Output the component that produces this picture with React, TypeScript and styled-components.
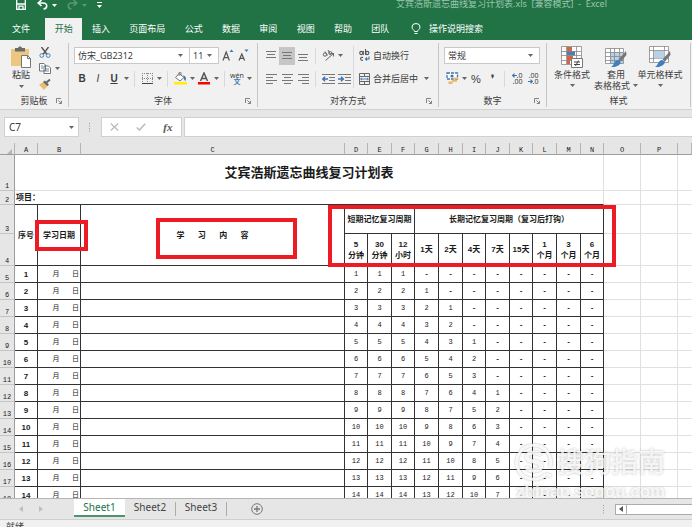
import React from "react";
import styled, { createGlobalStyle, css } from "styled-components";

const GREEN = "#217346";
const UI_FONT = `"Noto Sans", "Noto Sans CJK SC", sans-serif`;
const CELL_FONT = `"Liberation Sans", "Noto Sans CJK SC", sans-serif`;
const MONO_FONT = `"Liberation Mono", "Noto Sans CJK SC", monospace`;

const GlobalStyle = createGlobalStyle`
  * { box-sizing: border-box; }
  body { margin: 0; overflow: hidden; font-family: ${UI_FONT}; font-size: 9px; color: #3c3c3c; }
  button, input, select { font: inherit; color: inherit; border: 0; padding: 0; margin: 0; background: none; border-radius: 0; }
  svg { display: block; flex: none; }
`;

const Window = styled.main`
  display: flex;
  flex-direction: column;
  height: 100vh;
  background: #e6e6e6;
`;

/* ---------- title bar and ribbon tabs ---------- */

const TitleBar = styled.header`
  display: flex;
  align-items: flex-start;
  height: 18px;
  overflow: hidden;
  background: ${GREEN};
`;

const QuickAccess = styled.div`
  display: flex;
  align-items: center;
  gap: 6px;
  width: 396px;
  height: 10px;
  padding-left: 15px;
`;

const QuickButton = styled.button`
  display: flex;
  align-items: center;
  gap: 4px;
  margin-right: 4px;
`;

const DocumentTitle = styled.h1`
  margin: 0;
  font-size: 9px;
  font-weight: 400;
  line-height: 8px;
  white-space: pre;
  color: #9cc5ad;
`;

const TabBar = styled.nav`
  display: flex;
  height: 22px;
  background: ${GREEN};
`;

const RibbonTabs = styled.div`
  display: flex;
  width: 354px;
`;

const RibbonTab = styled.button<{ $active?: boolean; $file?: boolean }>`
  flex: 1 0 auto;
  padding: 0 9px;
  line-height: 20px;
  white-space: nowrap;
  color: ${(p) => (p.$active ? GREEN : "#ffffff")};
  background: ${(p) => (p.$active ? "#f1f1f1" : "transparent")};
  ${(p) => p.$file && css`flex: 0 0 45px; padding: 0 15px 0 12px;`}
`;

const TellMe = styled.button`
  display: flex;
  align-items: center;
  gap: 8px;
  margin-left: 12px;
  padding-bottom: 1px;
  color: #ffffff;
`;

/* ---------- ribbon ---------- */

const Ribbon = styled.section`
  display: flex;
  height: 70px;
  padding-top: 3px;
  background: #f1f1f1;
  border-bottom: 1px solid #d2d2d2;
`;

const GroupBox = styled.section<{ $width: number }>`
  display: flex;
  flex-direction: column;
  flex: none;
  width: ${(p) => p.$width}px;
  height: 64px;
  border-right: 1px solid #c6c6c6;
`;

const GroupBody = styled.div<{ $inset: number }>`
  display: flex;
  height: 51px;
  padding: 3px 0 0 ${(p) => p.$inset}px;
`;

const GroupFooter = styled.footer`
  display: grid;
  grid-template-columns: 12px 1fr 12px;
  align-items: center;
  height: 13px;
  text-align: center;
  line-height: 13px;
`;

const Launcher = styled.button`
  grid-column: 3;
`;

const GroupName = styled.span`
  grid-column: 2;
  grid-row: 1;
`;

const Rows = styled.div`
  display: flex;
  flex-direction: column;
  gap: 4px;
`;

const Row = styled.div`
  display: flex;
  align-items: center;
  height: 19px;
`;

const Tool = styled.button<{ $pressed?: boolean }>`
  display: flex;
  align-items: center;
  justify-content: center;
  width: 16px;
  height: 18px;
  background: ${(p) => (p.$pressed ? "#c6c6c6" : "transparent")};
`;

const Glyph = styled.span<{ $kind: "b" | "i" | "u" | "plain" }>`
  font-family: ${CELL_FONT};
  font-size: ${(p) => (p.$kind === "plain" ? 11 : 10)}px;
  line-height: 12px;
  font-weight: ${(p) => (p.$kind === "i" ? 400 : 700)};
  font-style: ${(p) => (p.$kind === "i" ? "italic" : "normal")};
  text-decoration: ${(p) => (p.$kind === "u" ? "underline" : "none")};
  ${(p) => p.$kind === "plain" && css`font-weight: 400;`}
`;

const DropButton = styled.button`
  display: flex;
  align-items: center;
  justify-content: center;
  width: 8px;
  height: 18px;
`;

const Separator = styled.span<{ $tall?: boolean }>`
  width: 1px;
  height: ${(p) => (p.$tall ? 42 : 16)}px;
  margin: ${(p) => (p.$tall ? "0 5px 0 1px" : "0 4px")};
  background: #d8d8d8;
`;

const LabelTool = styled.button`
  display: flex;
  align-items: center;
  gap: 3px;
  margin-right: 4px;
  white-space: nowrap;
  line-height: 13px;
`;

const ComboFrame = styled.label<{ $width: number }>`
  display: grid;
  grid-template-columns: 1fr 11px;
  align-items: center;
  width: ${(p) => p.$width}px;
  height: 17px;
  margin-right: -1px;
  background: #ffffff;
  border: 1px solid #c9c9c9;
`;

const ComboSelect = styled.select`
  grid-area: 1 / 1 / 2 / 3;
  width: 100%;
  height: 15px;
  padding-left: 3px;
  appearance: none;
  line-height: 15px;
`;

const ComboCaret = styled.span`
  grid-area: 1 / 2;
  pointer-events: none;
`;

const FontSizeTools = styled.div`
  display: flex;
  margin-left: 2px;
`;

const PasteButton = styled.button`
  display: flex;
  flex-direction: column;
  align-items: center;
  width: 32px;
  line-height: 12px;
`;

const ClipTools = styled.div`
  display: flex;
  flex-direction: column;
  justify-content: space-between;
  height: 45px;
`;

const ClipRow = styled.div`
  display: flex;
  align-items: center;
  height: 13px;
`;

const StyleButton = styled.button`
  display: flex;
  flex-direction: column;
  align-items: center;
  width: 44px;
  white-space: nowrap;
  line-height: 11px;
`;

const StyleIcon = styled.span`
  height: 23px;
`;

const StyleCaption = styled.span`
  display: flex;
  align-items: center;
  gap: 3px;
  min-height: 11px;
`;

/* ---------- formula bar ---------- */

const FormulaBar = styled.section`
  display: flex;
  align-items: center;
  height: 33px;
  padding: 1px 0 0 4px;
`;

const NameBox = styled.label`
  display: flex;
  align-items: center;
  width: 75px;
  height: 20px;
  padding: 0 4px;
  background: #ffffff;
  border: 1px solid #d0d0d0;
`;

const NameInput = styled.input`
  flex: 1;
  min-width: 0;
  font-size: 10px;
  line-height: 18px;
`;

const Grip = styled.span`
  width: 22px;
  padding-left: 10px;
`;

const FormulaButtons = styled.div`
  display: flex;
  align-items: center;
  justify-content: space-around;
  width: 81px;
  height: 20px;
  margin-right: 2px;
  background: #ffffff;
  border: 1px solid #d0d0d0;
`;

const FormulaInput = styled.input`
  flex: 1;
  min-width: 0;
  height: 20px;
  background: #ffffff;
  border: 1px solid #d0d0d0;
  border-right: 0;
`;

const FxGlyph = styled.span`
  font-family: "Liberation Serif", serif;
  font-size: 11px;
  font-style: italic;
  font-weight: 700;
  line-height: 12px;
  color: #555555;
`;

/* ---------- worksheet ---------- */

const SheetArea = styled.section`
  position: relative;
  flex: 1;
  min-height: 0;
  overflow: hidden;
  background: #ffffff;
  border-bottom: 1px solid #b5b5b5;
`;

const Grid = styled.table`
  width: 100%;
  table-layout: fixed;
  border-collapse: separate;
  border-spacing: 0;
  font-family: ${CELL_FONT};
  font-size: 8px;
  line-height: 11px;
  color: #1a1a1a;
`;

const GridRow = styled.tr<{ $height: number }>`
  height: ${(p) => p.$height}px;
`;

const ColumnHead = styled.th<{ $corner?: boolean }>`
  padding: ${(p) => (p.$corner ? "5px 0 0 7px" : "3px 0 0")};
  font-family: ${MONO_FONT};
  font-size: 7px;
  font-weight: 400;
  line-height: 8px;
  background: #e6e6e6;
  border-right: 1px solid #b4b4b4;
  border-bottom: 1px solid #9c9c9c;
`;

const RowHead = styled.th`
  padding: 0;
  vertical-align: bottom;
  font-family: ${MONO_FONT};
  font-size: 7px;
  font-weight: 400;
  line-height: 7px;
  background: #e6e6e6;
  border-right: 1px solid #9c9c9c;
  border-bottom: 1px solid #c4c4c4;
`;

type Edge = "dark" | "light" | "none";
const edgeColor = { dark: "#333333", light: "#e0e0e0", none: "transparent" };

const Cell = styled.td<{ $right?: Edge; $bottom?: Edge; $bold?: boolean; $align?: "left" | "right" }>`
  padding: 0 1px;
  text-align: ${(p) => p.$align ?? "center"};
  white-space: pre;
  font-weight: ${(p) => (p.$bold ? 700 : 400)};
  border-right: 1px solid ${(p) => edgeColor[p.$right ?? "dark"]};
  border-bottom: 1px solid ${(p) => edgeColor[p.$bottom ?? "dark"]};
`;

const TitleCell = styled(Cell)`
  font-size: 13px;
  line-height: 18px;
`;

const ValueCell = styled(Cell)`
  font-family: ${MONO_FONT};
  font-size: 7px;
`;

const Annotation = styled.div<{ $x: number; $y: number; $w: number; $h: number }>`
  position: absolute;
  left: ${(p) => p.$x}px;
  top: ${(p) => p.$y}px;
  width: ${(p) => p.$w}px;
  height: ${(p) => p.$h}px;
  border: 4px solid #ed1c24;
  pointer-events: none;
`;

const Watermark = styled.div`
  position: absolute;
  left: 515px;
  bottom: -3px;
  color: rgba(255, 255, 255, 0.8);
  text-shadow: 0 0 3px rgba(0, 0, 0, 0.25);
  pointer-events: none;
`;

const WatermarkBrand = styled.div`
  display: flex;
  align-items: center;
  gap: 4px;
  font-size: 27px;
  line-height: 36px;
  font-weight: 500;
`;

const WatermarkSite = styled.div`
  padding: 2px 0 0 1px;
  font-family: "Liberation Sans", sans-serif;
  font-size: 17px;
  line-height: 18px;
  font-weight: 700;
`;

/* ---------- sheet tabs and status ---------- */

const BottomBar = styled.footer`
  display: flex;
  align-items: flex-start;
  height: 21px;
  border-bottom: 1px solid #cfcfcf;
`;

const SheetNav = styled.div`
  display: flex;
  align-items: center;
  gap: 16px;
  width: 74px;
  height: 19px;
  padding-left: 19px;
`;

const SheetTab = styled.button<{ $active?: boolean }>`
  width: ${(p) => (p.$active ? 51 : 50)}px;
  height: 18px;
  font-size: 10px;
  line-height: 16px;
  color: ${(p) => (p.$active ? GREEN : "#444444")};
  background: ${(p) => (p.$active ? "#ffffff" : "transparent")};
  border-bottom: 2px solid ${(p) => (p.$active ? "#4a9570" : "transparent")};
`;

const TabDivider = styled.span`
  width: 1px;
  height: 14px;
  margin-top: 3px;
  background: #ababab;
`;

const AddSheet = styled.button`
  margin: 4px 0 0 24px;
`;

const ScrollZone = styled.div`
  display: flex;
  align-items: center;
  gap: 10px;
  width: 89px;
  height: 20px;
  margin-left: auto;
`;

const ScrollTrack = styled.div`
  display: flex;
  flex: 1;
  height: 11px;
  background: #ffffff;
  border: 1px solid #ababab;
  border-right: 0;
`;

const ScrollButton = styled.button`
  display: flex;
  align-items: center;
  justify-content: center;
  width: 11px;
  border-right: 1px solid #ababab;
`;

const StatusBar = styled.div`
  height: 7px;
  padding: 0 6px;
  overflow: hidden;
  line-height: 13px;
  background: #f1f1f1;
`;

/* ---------- icons ---------- */

const Caret = ({ color = "#666" }: { color?: string }) => (
  <svg width="5" height="3" viewBox="0 0 5 3"><path d="M0 0h5L2.5 3z" fill={color} /></svg>
);

const SaveIcon = () => (
  <svg width="12" height="10" viewBox="0 0 12 10" fill="none" stroke="#fff" strokeWidth="1.3">
    <path d="M1.7 0v9.3h8.6V0M1.7 4h8.6M4 9V6.2h4V9" />
  </svg>
);

const UndoIcon = ({ flip, color }: { flip?: boolean; color: string }) => (
  <svg width="11" height="10" viewBox="0 0 11 10" fill="none" stroke={color} strokeWidth="1.6">
    <g transform={flip ? "matrix(-1 0 0 1 11 0)" : undefined}>
      <path d="M4.5 0L1.2 3 4.5 6M1.2 3H6c5 0 4.700 5.500.5 6" />
    </g>
  </svg>
);

const BulbIcon = () => (
  <svg width="10" height="12" viewBox="0 0 10 12" fill="none" stroke="#fff">
    <path d="M3.500 8.500C3.500 7 1 6.500 1 4a4 3.500 0 0 1 8 0c0 2.500-2.500 3-2.500 4.500zM3.500 10.500h3" />
  </svg>
);

const LauncherIcon = () => (
  <svg width="6" height="6" viewBox="0 0 6 6" fill="none" stroke="#777" strokeWidth=".9">
    <path d="M.5 5V.5H5M2.300 2.300l3 3M5.500 2.800v2.700H2.800" />
  </svg>
);

const PasteIcon = () => (
  <svg width="22" height="23" viewBox="0 0 22 23">
    <path d="M1 3h18v17H1z" fill="#edc77f" />
    <path d="M5 2h3c.5-2 3.500-2 4 0h3v3.500H5z" fill="#6b6b6b" />
    <path d="M11.500 9.500h6l3 3v9h-9z" fill="#fff" stroke="#777" />
    <path d="M17.500 9.500v3h3" fill="none" stroke="#777" />
  </svg>
);

const CutIcon = () => (
  <svg width="12" height="11" viewBox="0 0 12 11" fill="none">
    <path d="M2.500 0l5.500 7.500M9.500 0L4 7.500" stroke="#555" strokeWidth="1.400" />
    <circle cx="2.800" cy="8.500" r="1.900" stroke="#4a7fb5" /><circle cx="9.200" cy="8.500" r="1.900" stroke="#4a7fb5" />
  </svg>
);

const CopyIcon = () => (
  <svg width="12" height="11" viewBox="0 0 12 11" fill="#fff" stroke="#666" strokeWidth=".9">
    <path d="M.5.500h4.500l1.500 1.500v6h-6zM5 3h4.500L11.500 5v5.500H5z" />
    <path d="M2 3h2M2 5h2M6.500 6h3.500M6.500 8h3.500" stroke="#4a7fb5" />
  </svg>
);

const BrushIcon = () => (
  <svg width="12" height="11" viewBox="0 0 12 11">
    <path d="M0 5.500L4.500 3l4 4L5 11z" fill="#edbb6d" />
    <path d="M4 3l1.800-1.500 4 4L8.500 7.200z" fill="#666" />
    <path d="M7.500 3.500L11 .500" stroke="#666" strokeWidth="2" />
  </svg>
);

const FontStep = ({ up }: { up?: boolean }) => (
  <svg width="12" height="13" viewBox="0 0 12 13" fill="none">
    <path d={up ? "M1 11.500L4.200 3l3.200 8.500M2.200 8.700h4" : "M1 11.500L3.800 5l2.800 6.500M2 9.300h3.600"} stroke="#555" strokeWidth="1.200" />
    <path d={up ? "M7.500 3L9.500.500l2 2.500z" : "M6.500.500h4L8.500 3z"} fill="#3f76b0" />
  </svg>
);

const BordersIcon = () => (
  <svg width="11" height="11" viewBox="0 0 11 11" fill="none" stroke="#888">
    <path d="M.5 0v10M5.500 0v10M10.500 0v10M0 .500h11M0 5.500h11" strokeDasharray="1 1" />
    <path d="M0 10.500h11" stroke="#444" />
  </svg>
);

const FillIcon = () => (
  <svg width="13" height="13" viewBox="0 0 13 13">
    <path d="M5 1.500l5 4L6 9 1.500 5.500z" fill="#fff" stroke="#777" />
    <path d="M5 4V1a1 1 0 0 1 2 0v2" fill="none" stroke="#777" />
    <path d="M9 3.500c3 .500 3.500 3 2.500 5.500-1-.500-1.800-2-1.500-3.500z" fill="#3f76b0" />
    <path d="M0 10h13v2.500H0z" fill="#fff100" />
  </svg>
);

const FontColorIcon = () => (
  <svg width="12" height="13" viewBox="0 0 12 13">
    <path d="M2.500 9L6 1l3.500 8M3.800 6.500h4.400" fill="none" stroke="#555" strokeWidth="1.500" />
    <path d="M0 10h12v2.500H0z" fill="#f00" />
  </svg>
);

const Phonetic = styled.span`
  display: flex;
  flex-direction: column;
  align-items: center;
  font-size: 7px;
  line-height: 6px;
`;

const PhoneticBase = styled.span`
  color: #3f76b0;
  font-weight: 700;
`;

const linesFor: Record<string, string> = {
  top: "M0 2.500h10M1 5.500h8M0 8.500h10",
  middle: "M0 3.500h10M1 6.500h8M0 9.500h10",
  bottom: "M0 5.500h10M1 8.500h8M0 11.500h10",
  left: "M0 2.500h11M0 5.500h7M0 8.500h11M0 11.500h7",
  center: "M0 2.500h11M2 5.500h7M0 8.500h11M2 11.500h7",
  right: "M0 2.500h11M4 5.500h7M0 8.500h11M4 11.500h7",
};

const LinesIcon = ({ kind }: { kind: string }) => (
  <svg width="11" height="14" viewBox="0 0 11 14"><path d={linesFor[kind]} stroke="#777" fill="none" /></svg>
);

const OrientIcon = () => (
  <svg width="13" height="13" viewBox="0 0 13 13" fill="none" stroke="#666">
    <circle cx="3" cy="5.500" r="1.700" /><path d="M3 2.500l2.500 4M6 1l2.500 4.500" /><circle cx="8.300" cy="4" r="1.500" />
    <path d="M3.500 11.500L11.500 4.500M11.500 7.500v-3h-3" />
  </svg>
);

const IndentIcon = ({ more }: { more?: boolean }) => (
  <svg width="13" height="12" viewBox="0 0 13 12" fill="none">
    <path d="M0 1.500h13M7 4.500h6M7 7.500h6M0 10.500h13" stroke="#777" />
    <path d={more ? "M0 6h5M3 3.800L5.300 6 3 8.200" : "M1 6h5M3 3.800L.7 6 3 8.200"} stroke="#3f76b0" strokeWidth="1.500" />
  </svg>
);

const WrapIcon = () => (
  <svg width="11" height="13" viewBox="0 0 11 13" fill="none" stroke="#555" strokeWidth="1.100">
    <circle cx="2.300" cy="4" r="1.600" /><path d="M4.300 2v4M6.500 0v6M4 8.500C1 7.500.5 11.500 4 11.500" /><circle cx="8.300" cy="4" r="1.600" />
    <path d="M10 7.500v2.500H6.500M8 8.500L6.500 10 8 11.500" stroke="#3f76b0" />
  </svg>
);

const MergeIcon = () => (
  <svg width="11" height="12" viewBox="0 0 11 12" fill="none" stroke="#666">
    <path d="M.5.500h10v11H.5zM.5 3.500h10M.5 8.500h10M5.500.500v3M5.500 8.500v3" />
    <path d="M1.500 6h8M3 4.800L1.700 6 3 7.200M8 4.800L9.300 6 8 7.200" stroke="#3f76b0" strokeWidth=".9" />
  </svg>
);

const CurrencyIcon = () => (
  <svg width="13" height="13" viewBox="0 0 13 13">
    <path d="M1 1h10.500v6H1z" fill="#fff" stroke="#3f76b0" strokeWidth="1.300" strokeDasharray="3 1" />
    <circle cx="6" cy="4" r="1.600" fill="#3f76b0" />
    <path d="M7 5.500h5v2H7zM6 8h5v1.800H6zM2.500 9.500h4v2.500h-4z" fill="#e9b765" />
  </svg>
);

const Decimals = styled.span`
  display: flex;
  flex-direction: column;
  align-items: flex-end;
  font-size: 7px;
  line-height: 6px;
`;

const DecimalLine = styled.span`
  display: flex;
  align-items: center;
`;

const SmallArrow = ({ right }: { right?: boolean }) => (
  <svg width="5" height="5" viewBox="0 0 5 5" fill="none" stroke="#3f76b0" strokeWidth="1.200">
    <path d={right ? "M0 2.500h4M2.500.700l1.800 1.800-1.800 1.800" : "M1 2.500h4M2.500.700L.700 2.500l1.800 1.800"} />
  </svg>
);

const ConditionalIcon = () => (
  <svg width="22" height="22" viewBox="0 0 22 22">
    <path d="M.5.500h20v18H.5z" fill="#fff" />
    <path d="M6 1h5v4H6zM6 9.500h6V14H6zM6 14h3v4H6z" fill="#d86344" /><path d="M6 5h8v4.500H6z" fill="#4a7fb5" />
    <path d="M.5.500h20v18H.5zM5.500 0v18M15.500 0v18M0 5.500h20M0 9.500h20M0 14.500h20" fill="none" stroke="#888" strokeWidth=".8" />
    <path d="M10.500 12.500h11v9h-11z" fill="#fff" stroke="#777" />
    <path d="M13 16h6M13 18.500h6M17.500 14.500l-3 5.500" stroke="#444" fill="none" />
  </svg>
);

const BrushTip = () => (
  <>
    <path d="M21 5L13.500 13.500l2.500 2L21.500 9z" fill="#777" />
    <path d="M12.500 14c2 0 3.500 1.500 3 3.500C13 20.500 9 21.500 6 21c3-1.500 3-6 6.500-7z" fill="#3f7fbf" />
  </>
);

const TableStyleIcon = () => (
  <svg width="22" height="22" viewBox="0 0 22 22">
    <path d="M.5 2.500h18v15H.5z" fill="#fff" /><path d="M5 6h13.500v11.500H5z" fill="#b9d0e8" />
    <path d="M.5 2.500h18v15H.5zM5.500 2v15M9.500 2v15M14.500 2v15M0 6.500h18M0 10.500h18M0 14.500h18" fill="none" stroke="#888" strokeWidth=".8" />
    <BrushTip />
  </svg>
);

const CellStyleIcon = () => (
  <svg width="22" height="22" viewBox="0 0 22 22">
    <path d="M.5.500h19v16H.5z" fill="#fff" />
    <path d="M.5.500h19v16H.5zM4.500 0v16M15.500 0v16M0 4.500h19M0 12.500h19" fill="none" stroke="#888" strokeWidth=".8" />
    <path d="M5 5h10.500v7.500H5z" fill="#b9d0e8" />
    <BrushTip />
  </svg>
);

const DotsIcon = () => (
  <svg width="2" height="9" viewBox="0 0 2 9" fill="#999"><path d="M0 0h1v1H0zM0 2.500h1v1H0zM0 5h1v1H0zM0 7.500h1v1H0z" /></svg>
);

const CancelIcon = () => (
  <svg width="9" height="8" viewBox="0 0 9 8"><path d="M.8.500l7.400 7M8.200.500l-7.400 7" stroke="#bcbcbc" strokeWidth="1.300" /></svg>
);

const ConfirmIcon = () => (
  <svg width="10" height="8" viewBox="0 0 10 8" fill="none"><path d="M.7 4.500L3.500 7 9.200.800" stroke="#bcbcbc" strokeWidth="1.600" /></svg>
);

const NavTriangle = ({ right, color = "#bdbdbd" }: { right?: boolean; color?: string }) => (
  <svg width="4" height="6" viewBox="0 0 4 6"><path d={right ? "M0 0l4 3-4 3z" : "M4 0L0 3l4 3z"} fill={color} /></svg>
);

const AddIcon = () => (
  <svg width="12" height="12" viewBox="0 0 12 12" fill="none" stroke="#777">
    <circle cx="6" cy="6" r="5.300" /><path d="M6 3v6M3 6h6" strokeWidth="1.300" />
  </svg>
);

const CornerIcon = () => (
  <svg width="5" height="5" viewBox="0 0 5 5"><path d="M5 0v5H0z" fill="#b4b4b4" /></svg>
);

const BrandShape = styled.svg`
  filter: drop-shadow(0 0 1px rgba(0, 0, 0, 0.3));
`;

const BrandMark = () => (
  <BrandShape width="38" height="38" viewBox="0 0 38 38" fill="none" stroke="#fff" strokeOpacity=".85">
    <path d="M31 31A17 17 0 1 1 35 24M31 31l5 2" strokeWidth="3" />
    <path d="M26 12c-4-4-14-3-14 2 0 6 14 3 14 9 0 6-11 6-15 1" strokeWidth="4" />
  </BrandShape>
);

/* ---------- composed parts ---------- */

type GroupProps = { name: string; width: number; inset?: number; launcher?: boolean; children: React.ReactNode };

function Group({ name, width, inset = 5, launcher = true, children }: GroupProps) {
  return (
    <GroupBox $width={width} aria-label={name}>
      <GroupBody $inset={inset}>{children}</GroupBody>
      <GroupFooter>
        <GroupName>{name}</GroupName>
        {launcher && <Launcher aria-label={`${name}设置`}><LauncherIcon /></Launcher>}
      </GroupFooter>
    </GroupBox>
  );
}

function Drop({ label }: { label: string }) {
  return <DropButton aria-label={label}><Caret /></DropButton>;
}

function Combo({ label, value, width }: { label: string; value: string; width: number }) {
  return (
    <ComboFrame $width={width}>
      <ComboSelect aria-label={label} defaultValue={value}><option>{value}</option></ComboSelect>
      <ComboCaret><Caret /></ComboCaret>
    </ComboFrame>
  );
}

const ribbonTabs = ["开始", "插入", "页面布局", "公式", "数据", "审阅", "视图", "帮助", "团队"];

const columns = [
  ["A", 23], ["B", 43], ["C", 264], ["D", 23], ["E", 24], ["F", 23], ["G", 24], ["H", 24], ["I", 23],
  ["J", 24], ["K", 23], ["L", 24], ["M", 24], ["N", 23], ["O", 37], ["P", 37],
] as const;

const periods = ["5\n分钟", "30\n分钟", "12\n小时", "1天", "2天", "4天", "7天", "15天", "1\n个月", "3\n个月", "6\n个月"];
const offsets = [0, 0, 0, 1, 2, 4, 7, 15, 30, 90, 180];
const days = Array.from({ length: 14 }, (_, i) => i + 1);

function BlankCells() {
  return (
    <>
      <Cell $right="light" $bottom="light" />
      <Cell $right="light" $bottom="light" />
      <Cell $right="none" $bottom="light" />
    </>
  );
}

function Worksheet() {
  return (
    <Grid>
      <colgroup>
        <col width={15} />
        {columns.map(([name, width]) => <col key={name} width={width} />)}
        <col />
      </colgroup>
      <thead>
        <GridRow $height={12}>
          <ColumnHead $corner><CornerIcon /></ColumnHead>
          {columns.map(([name]) => <ColumnHead key={name} scope="col">{name}</ColumnHead>)}
          <ColumnHead />
        </GridRow>
      </thead>
      <tbody>
        <GridRow $height={36}>
          <RowHead scope="row">1</RowHead>
          <TitleCell colSpan={14} $bold $right="light" $bottom="light">艾宾浩斯遗忘曲线复习计划表</TitleCell>
          <BlankCells />
        </GridRow>
        <GridRow $height={14}>
          <RowHead scope="row">2</RowHead>
          <Cell colSpan={14} $bold $align="left" $right="light">项目：</Cell>
          <BlankCells />
        </GridRow>
        <GridRow $height={29}>
          <RowHead scope="row">3</RowHead>
          <Cell rowSpan={2} $bold>序号</Cell>
          <Cell rowSpan={2} $bold>学习日期</Cell>
          <Cell rowSpan={2} $bold>{["学", "习", "内", "容"].join("\u00a0".repeat(6))}</Cell>
          <Cell colSpan={3} $bold>短期记忆复习周期</Cell>
          <Cell colSpan={8} $bold>长期记忆复习周期（复习后打钩）</Cell>
          <BlankCells />
        </GridRow>
        <GridRow $height={32}>
          <RowHead scope="row">4</RowHead>
          {periods.map((text) => <Cell key={text} $bold>{text}</Cell>)}
          <BlankCells />
        </GridRow>
        {days.map((day) => (
          <GridRow key={day} $height={17}>
            <RowHead scope="row">{day + 4}</RowHead>
            <Cell $bold>{day}</Cell>
            <ValueCell $align="right">{"月\u00a0\u00a0\u00a0日"}</ValueCell>
            <Cell />
            {offsets.map((offset, i) => (
              <ValueCell key={i} $bold={day <= offset}>{day > offset ? day - offset : "-"}</ValueCell>
            ))}
            <BlankCells />
          </GridRow>
        ))}
      </tbody>
    </Grid>
  );
}

export default function App() {
  return (
    <Window>
      <GlobalStyle />
      <TitleBar>
        <QuickAccess>
          <QuickButton aria-label="保存"><SaveIcon /></QuickButton>
          <QuickButton aria-label="撤消"><UndoIcon color="#fff" /><Caret color="#fff" /></QuickButton>
          <QuickButton aria-label="恢复"><UndoIcon flip color="#5b9777" /><Caret color="#5b9777" /></QuickButton>
          <QuickButton aria-label="自定义快速访问工具栏">
            <svg width="5" height="6" viewBox="0 0 5 6" fill="#fff"><path d="M0 0h5v1H0zM0 3h5L2.500 6z" /></svg>
          </QuickButton>
        </QuickAccess>
        <DocumentTitle>{"艾宾浩斯遗忘曲线复习计划表.xls  [兼容模式]  -  Excel"}</DocumentTitle>
      </TitleBar>
      <TabBar>
        <RibbonTab $file>文件</RibbonTab>
        <RibbonTabs>
          {ribbonTabs.map((tab, i) => <RibbonTab key={tab} $active={i === 0}>{tab}</RibbonTab>)}
        </RibbonTabs>
        <TellMe><BulbIcon />操作说明搜索</TellMe>
      </TabBar>

      <Ribbon>
        <Group name="剪贴板" width={69}>
          <PasteButton><PasteIcon />粘贴<StyleCaption><Caret /></StyleCaption></PasteButton>
          <ClipTools>
            <ClipRow><Tool aria-label="剪切"><CutIcon /></Tool></ClipRow>
            <ClipRow><Tool aria-label="复制"><CopyIcon /></Tool><Drop label="复制选项" /></ClipRow>
            <ClipRow><Tool aria-label="格式刷"><BrushIcon /></Tool></ClipRow>
          </ClipTools>
        </Group>

        <Group name="字体" width={189}>
          <Rows>
            <Row>
              <Combo label="字体" value="仿宋_GB2312" width={116} />
              <Combo label="字号" value="11" width={30} />
              <FontSizeTools>
                <Tool aria-label="增大字号"><FontStep up /></Tool>
                <Tool aria-label="减小字号"><FontStep /></Tool>
              </FontSizeTools>
            </Row>
            <Row>
              <Tool aria-label="加粗"><Glyph $kind="b">B</Glyph></Tool>
              <Tool aria-label="倾斜"><Glyph $kind="i">I</Glyph></Tool>
              <Tool aria-label="下划线"><Glyph $kind="u">U</Glyph></Tool>
              <Drop label="下划线选项" />
              <Separator />
              <Tool aria-label="边框"><BordersIcon /></Tool>
              <Drop label="边框选项" />
              <Separator />
              <Tool aria-label="填充颜色"><FillIcon /></Tool>
              <Drop label="填充颜色选项" />
              <Tool aria-label="字体颜色"><FontColorIcon /></Tool>
              <Drop label="字体颜色选项" />
              <Separator />
              <Tool aria-label="拼音"><Phonetic>wén<PhoneticBase>文</PhoneticBase></Phonetic></Tool>
              <Drop label="拼音选项" />
            </Row>
          </Rows>
        </Group>

        <Group name="对齐方式" width={181}>
          <Rows>
            <Row>
              <Tool aria-label="顶端对齐"><LinesIcon kind="top" /></Tool>
              <Tool aria-label="垂直居中" $pressed><LinesIcon kind="middle" /></Tool>
              <Tool aria-label="底端对齐"><LinesIcon kind="bottom" /></Tool>
              <Separator />
              <Tool aria-label="方向"><OrientIcon /></Tool>
              <Drop label="方向选项" />
            </Row>
            <Row>
              <Tool aria-label="左对齐"><LinesIcon kind="left" /></Tool>
              <Tool aria-label="居中"><LinesIcon kind="center" /></Tool>
              <Tool aria-label="右对齐"><LinesIcon kind="right" /></Tool>
              <Separator />
              <Tool aria-label="减少缩进量"><IndentIcon /></Tool>
              <Tool aria-label="增加缩进量"><IndentIcon more /></Tool>
            </Row>
          </Rows>
          <Separator $tall />
          <Rows>
            <Row><LabelTool><WrapIcon />自动换行</LabelTool></Row>
            <Row><LabelTool><MergeIcon />合并后居中</LabelTool><Drop label="合并选项" /></Row>
          </Rows>
        </Group>

        <Group name="数字" width={108}>
          <Rows>
            <Row><Combo label="数字格式" value="常规" width={96} /></Row>
            <Row>
              <Tool aria-label="会计数字格式"><CurrencyIcon /></Tool>
              <Drop label="会计数字格式选项" />
              <Tool aria-label="百分比样式"><Glyph $kind="plain">%</Glyph></Tool>
              <Tool aria-label="千位分隔样式"><Glyph $kind="b">❜</Glyph></Tool>
              <Separator />
              <Tool aria-label="增加小数位数">
                <Decimals><DecimalLine><SmallArrow />.0</DecimalLine><DecimalLine>.00</DecimalLine></Decimals>
              </Tool>
              <Tool aria-label="减少小数位数">
                <Decimals><DecimalLine>.00</DecimalLine><DecimalLine><SmallArrow right />.0</DecimalLine></Decimals>
              </Tool>
            </Row>
          </Rows>
        </Group>

        <Group name="样式" width={144} inset={3} launcher={false}>
          <StyleButton>
            <StyleIcon><ConditionalIcon /></StyleIcon>
            <StyleCaption>条件格式</StyleCaption>
            <StyleCaption><Caret /></StyleCaption>
          </StyleButton>
          <StyleButton>
            <StyleIcon><TableStyleIcon /></StyleIcon>
            <StyleCaption>套用</StyleCaption>
            <StyleCaption>表格格式<Caret /></StyleCaption>
          </StyleButton>
          <StyleButton>
            <StyleIcon><CellStyleIcon /></StyleIcon>
            <StyleCaption>单元格样式</StyleCaption>
            <StyleCaption><Caret /></StyleCaption>
          </StyleButton>
        </Group>
      </Ribbon>

      <FormulaBar>
        <NameBox>
          <NameInput aria-label="名称框" defaultValue="C7" />
          <Caret />
        </NameBox>
        <Grip><DotsIcon /></Grip>
        <FormulaButtons>
          <button aria-label="取消"><CancelIcon /></button>
          <button aria-label="输入"><ConfirmIcon /></button>
          <button aria-label="插入函数"><FxGlyph>fx</FxGlyph></button>
        </FormulaButtons>
        <FormulaInput aria-label="编辑栏" />
      </FormulaBar>

      <SheetArea>
        <Worksheet />
        <Annotation $x={35} $y={77} $w={53} $h={31} />
        <Annotation $x={156} $y={75} $w={141} $h={41} />
        <Annotation $x={328} $y={62} $w={288} $h={62} />
        <Watermark>
          <WatermarkBrand><BrandMark />搜狗指南</WatermarkBrand>
          <WatermarkSite>zhinan.sogou.com</WatermarkSite>
        </Watermark>
      </SheetArea>

      <BottomBar>
        <SheetNav>
          <button aria-label="上一个工作表"><NavTriangle /></button>
          <button aria-label="下一个工作表"><NavTriangle right /></button>
        </SheetNav>
        <SheetTab $active>Sheet1</SheetTab>
        <SheetTab>Sheet2</SheetTab>
        <TabDivider />
        <SheetTab>Sheet3</SheetTab>
        <TabDivider />
        <AddSheet aria-label="新工作表"><AddIcon /></AddSheet>
        <ScrollZone>
          <DotsIcon />
          <ScrollTrack>
            <ScrollButton aria-label="向左滚动"><NavTriangle color="#555" /></ScrollButton>
          </ScrollTrack>
        </ScrollZone>
      </BottomBar>
      <StatusBar>就绪</StatusBar>
    </Window>
  );
}
